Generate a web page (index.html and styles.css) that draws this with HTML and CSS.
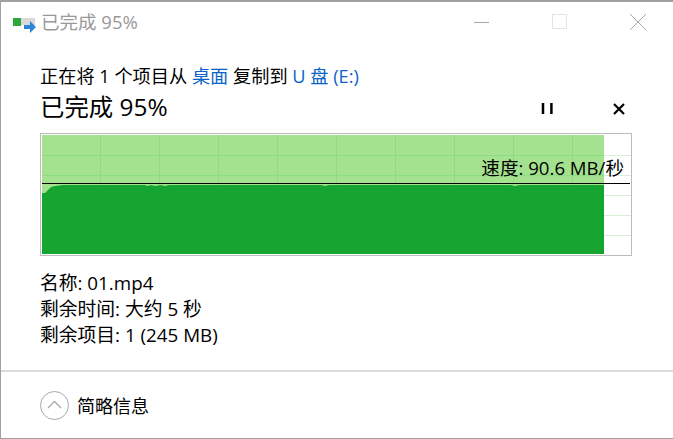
FILE: index.html
```html
<!DOCTYPE html>
<html lang="zh-CN">
<head>
  <meta charset="UTF-8">
  <title>已完成 95%</title>
  <link rel="stylesheet" href="styles.css">
</head>
<body>
  <div class="window">
    <div class="titlebar">
      <svg class="app-icon" width="24" height="24" viewBox="0 0 24 24">
        <rect x="8" y="8" width="14" height="7" fill="#d9d9d9"/>
        <rect x="0" y="8" width="8" height="8" fill="#2ca83a"/>
        <path d="M11 15h6v-4l6 6-6 6v-4h-6z" fill="#2b86d9"/>
      </svg>
      <span class="window-title">已完成 95%</span>
      <div class="window-buttons">
        <svg width="16" height="16" viewBox="0 0 16 16"><path d="M0 8.500h15" stroke="#a8a8a8"/></svg>
        <svg width="16" height="16" viewBox="0 0 16 16"><rect x="0.500" y="0.500" width="14" height="14" fill="none" stroke="#e4e4e4"/></svg>
        <svg width="16" height="16" viewBox="0 0 16 16"><path d="M0 0l16 16M16 0L0 16" stroke="#a8a8a8"/></svg>
      </div>
    </div>

    <div class="main">
      <p class="copy-line">正在将 1 个项目从 <a>桌面</a> 复制到 <a>U 盘 (E:)</a></p>
      <div class="status-row">
        <h1>已完成 95%</h1>
        <div class="actions">
          <svg width="12" height="12" viewBox="0 0 12 12"><path d="M2 0v11M10.400 0v11" stroke="#000" stroke-width="2.500"/></svg>
          <svg width="12" height="12" viewBox="0 0 12 12"><path d="M1 1l10 10M11 1L1 11" stroke="#000" stroke-width="2.200"/></svg>
        </div>
      </div>

      <div class="chart">
        <svg width="590" height="121" viewBox="0 0 590 121">
          <rect x="1" y="1" width="562" height="119" fill="#a5e28f"/>
          <g stroke="#8edb85">
            <path d="M59.500 1v50M118.500 1v50M177.500 1v50M236.500 1v50M295.500 1v50M354.500 1v50M413.500 1v50M472.500 1v50M531.500 1v50"/>
            <path d="M1 21.500h562M1 41.500h562"/>
          </g>
          <g stroke="#d6efd6">
            <path d="M563 21.500h27M563 41.500h27M563 61.500h27M563 81.500h27M563 101.500h27"/>
          </g>
          <path d="M1 120V59H4L7 56L10 53L14 52L22 51H104L106 52L110 51L114 52L120 51L124 52L128 51H280L284 52L288 51H470L474 52L478 51H563V120z" fill="#17a531"/>
          <path d="M1 49.500H589" stroke="#000"/>
        </svg>
        <span class="speed">速度: 90.6 MB/秒</span>
      </div>

      <div class="details">
        <div>名称: 01.mp4</div>
        <div>剩余时间: 大约 5 秒</div>
        <div>剩余项目: 1 (245 MB)</div>
      </div>
    </div>

    <div class="footer">
      <svg width="29" height="29" viewBox="0 0 29 29">
        <circle cx="14.500" cy="14.500" r="14" fill="none" stroke="#a8a8a8"/>
        <path d="M8 17l6.500-6.500L21 17" fill="none" stroke="#a8a8a8" stroke-width="1.300"/>
      </svg>
      <span>简略信息</span>
    </div>
  </div>
</body>
</html>
```

FILE: styles.css
```css
body {
  margin: 0;
  background-color: #fff;
  font-family: "Open Sans", "Noto Sans CJK SC", sans-serif;
  color: #000;
  overflow: hidden;
}

.window {
  display: flex;
  flex-direction: column;
  height: 439px;
  box-sizing: border-box;
  border: 1px solid #a0a0a0;
  border-width: 2px 0 1px 1px;
  background-color: #fff;
}

.titlebar {
  display: flex;
  align-items: center;
  height: 40px;
  padding-left: 12px;
}

.app-icon {
  margin-right: 4px;
}

.window-title {
  margin-bottom: 2px;
  font-size: 18.500px;
  color: #999;
}

.window-buttons {
  display: flex;
  gap: 62px;
  margin-left: auto;
  margin-right: 27px;
}

.main {
  flex-grow: 1;
  padding: 20px 40px 0 39px;
}

.copy-line {
  margin: 0;
  font-size: 18.200px;
  line-height: 28px;
}

.copy-line a {
  color: #0b63c9;
}

.status-row {
  display: flex;
  align-items: center;
  justify-content: space-between;
  height: 34px;
}

h1 {
  margin: 0 0 4px;
  font-size: 24.400px;
  font-weight: 400;
  color: #000;
}

.actions {
  display: flex;
  gap: 60px;
  margin: 4px 8px 0 0;
}

.chart {
  position: relative;
  width: 590px;
  height: 121px;
  margin-top: 9px;
  border: 1px solid #bcbcbc;
}

.chart svg {
  display: block;
}

.speed {
  position: absolute;
  top: 22px;
  right: 7px;
  font-size: 18.600px;
  line-height: 24px;
}

.details {
  margin-top: 14px;
  font-size: 18.800px;
  line-height: 26px;
}

.footer {
  display: flex;
  align-items: center;
  gap: 8px;
  height: 66px;
  padding-left: 39px;
  border-top: 2px solid #dcdcdc;
  font-size: 18px;
}
```
